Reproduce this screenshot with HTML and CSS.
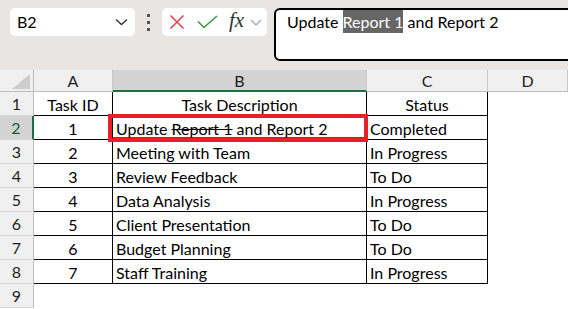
FILE: index.html
```html
<!DOCTYPE html>
<html lang="en">
<head>
<meta charset="UTF-8">
<meta name="viewport" content="width=device-width, initial-scale=1.0">
<title>Task Sheet</title>
<link rel="stylesheet" href="styles.css">
</head>
<body>
  <div class="toolbar">
    <div class="namebox">
      <span>B2</span>
      <svg class="chev" width="13" height="8" viewBox="0 0 13 8"><path d="M1 1.5 L6.5 6.5 L12 1.5" fill="none" stroke="#333" stroke-width="1.4"/></svg>
    </div>
    <div class="dots"><i></i><i></i><i></i></div>
    <div class="fnbox">
      <svg width="16" height="16" viewBox="0 0 16 16"><path d="M1.5 1.5 L14.5 14.5 M14.5 1.5 L1.5 14.5" stroke="#e5464c" stroke-width="1.6" fill="none"/></svg>
      <svg class="check" width="21" height="14" viewBox="0 0 21 14"><path d="M1 6.5 L7 12.5 L20 1" stroke="#3a9a45" stroke-width="1.6" fill="none"/></svg>
      <span class="fx">fx</span>
      <svg width="12" height="7" viewBox="0 0 12 7"><path d="M1 1 L6 6 L11 1" fill="none" stroke="#a8a8a8" stroke-width="1.3"/></svg>
    </div>
    <div class="formula">Update <span class="sel">Report 1</span> and Report 2</div>
  </div>

  <div class="sheet">
    <div class="corner"><svg width="18" height="15" viewBox="0 0 18 15"><polygon points="18,0 18,15 0,15" fill="#cdcdcd"/></svg></div>
    <div class="ch">A</div>
    <div class="ch active">B</div>
    <div class="ch">C</div>
    <div class="ch">D</div>

    <div class="rh">1</div>
    <div class="cell mid">Task ID</div>
    <div class="cell mid">Task Description</div>
    <div class="cell mid">Status</div>
    <div class="blank"></div>

    <div class="rh active">2</div>
    <div class="cell mid">1</div>
    <div class="cell current">Update <s>Report 1</s> and Report 2</div>
    <div class="cell">Completed</div>
    <div class="blank"></div>

    <div class="rh">3</div>
    <div class="cell mid">2</div>
    <div class="cell">Meeting with Team</div>
    <div class="cell">In Progress</div>
    <div class="blank"></div>

    <div class="rh">4</div>
    <div class="cell mid">3</div>
    <div class="cell">Review Feedback</div>
    <div class="cell">To Do</div>
    <div class="blank"></div>

    <div class="rh">5</div>
    <div class="cell mid">4</div>
    <div class="cell">Data Analysis</div>
    <div class="cell">In Progress</div>
    <div class="blank"></div>

    <div class="rh">6</div>
    <div class="cell mid">5</div>
    <div class="cell">Client Presentation</div>
    <div class="cell">To Do</div>
    <div class="blank"></div>

    <div class="rh">7</div>
    <div class="cell mid">6</div>
    <div class="cell">Budget Planning</div>
    <div class="cell">To Do</div>
    <div class="blank"></div>

    <div class="rh">8</div>
    <div class="cell mid">7</div>
    <div class="cell">Staff Training</div>
    <div class="cell">In Progress</div>
    <div class="blank"></div>

    <div class="rh">9</div>
    <div class="blank"></div>
    <div class="blank"></div>
    <div class="blank"></div>
    <div class="blank"></div>

    <div class="mark"></div>
  </div>
</body>
</html>
```

FILE: styles.css
```css
body {
  margin: 0;
  overflow: hidden;
  background: #fff;
  font-family: Lato, "Open Sans", sans-serif;
  font-size: 16px;
  color: #000;
}

.toolbar {
  height: 70px;
  box-sizing: border-box;
  padding: 8px 0 0 10px;
  background: #e9e5e3;
  display: flex;
  align-items: flex-start;
}

.toolbar > * {
  flex-shrink: 0;
}

.namebox {
  width: 125px;
  height: 28px;
  box-sizing: border-box;
  background: #fff;
  border-radius: 5px;
  display: flex;
  align-items: center;
  justify-content: space-between;
  padding: 0 7px 0 7px;
  line-height: 28px;
}

.dots {
  width: 27px;
  height: 28px;
  display: flex;
  flex-direction: column;
  align-items: center;
  justify-content: center;
  gap: 4px;
}

.dots i {
  width: 3px;
  height: 3px;
  background: #555;
}

.fnbox {
  width: 105px;
  height: 28px;
  box-sizing: border-box;
  background: #fff;
  border-radius: 5px;
  display: flex;
  align-items: center;
  padding: 0 3px 0 7px;
}

.fnbox .check {
  margin-left: 12px;
}

.fx {
  font-family: "Liberation Serif", serif;
  font-style: italic;
  font-size: 21px;
  color: #333;
  margin: -3px 6px 0 11px;
}

.formula {
  width: 310px;
  height: 53px;
  box-sizing: border-box;
  margin-left: 7px;
  border: 2px solid #000;
  border-radius: 6px;
  background: #fff;
  padding: 0 0 0 11px;
  line-height: 23px;
  white-space: nowrap;
}

.sel {
  display: inline-block;
  background: #666;
  color: #fff;
  line-height: 23px;
}

.sheet {
  position: relative;
  display: grid;
  grid-template-columns: 34px 79px 254px 121px 1fr;
  grid-template-rows: 22px repeat(9, 24px);
}

.sheet > div {
  box-sizing: border-box;
  white-space: nowrap;
  overflow: hidden;
}

.corner {
  background: #f0f0f0;
  border-right: 1px solid #bdbdbd;
  border-bottom: 1px solid #bdbdbd;
  display: flex;
  align-items: flex-end;
  justify-content: flex-end;
  padding: 0 3px 2px 0;
}

.ch {
  background: #f0f0f0;
  border-right: 1px solid #c8c8c8;
  border-bottom: 1px solid #bdbdbd;
  text-align: center;
  line-height: 22px;
  color: #222;
}

.ch.active {
  background: #d3d3d3;
  border-bottom: 2px solid #1e6f3e;
}

.rh {
  background: #f0f0f0;
  border-right: 1px solid #bdbdbd;
  border-bottom: 1px solid #d6d6d6;
  text-align: center;
  line-height: 24px;
  color: #222;
}

.rh.active {
  background: #d3d3d3;
  border-right: 2px solid #1e6f3e;
  color: #185c37;
}

.cell {
  border-right: 1px solid #000;
  border-bottom: 1px solid #000;
  line-height: 25px;
  padding-left: 3px;
}

.cell.mid {
  text-align: center;
  padding-left: 0;
}

.cell.current {
  box-shadow: inset 0 -2px 0 #1e6f3e;
}

.blank {
  background: #fff;
}

/* red annotation box drawn over B2 */
.mark {
  position: absolute;
  left: 108px;
  top: 44px;
  width: 260px;
  height: 28px;
  box-sizing: border-box;
  border: 4px solid #e8202a;
}
```
